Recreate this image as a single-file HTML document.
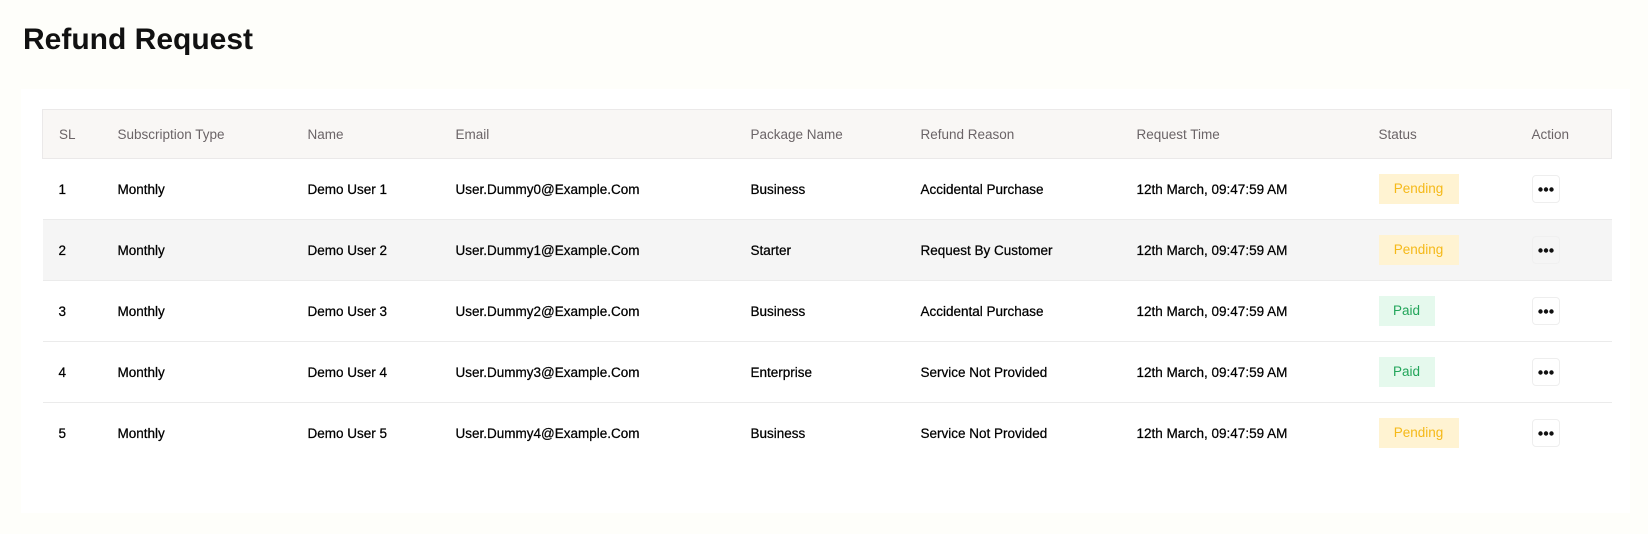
<!DOCTYPE html>
<html><head><style>
*{margin:0;padding:0;box-sizing:border-box}
body{width:1648px;height:534px;background:#fefefa;font-family:"Liberation Sans",sans-serif;position:relative;overflow:hidden}
h1{position:absolute;left:23px;top:23px;font-size:30px;font-weight:700;color:#111;letter-spacing:0px}
.card{position:absolute;left:21px;top:89px;width:1609px;height:424px;background:#fff}
table{position:absolute;left:21px;top:20px;width:1570px;border-collapse:collapse;font-size:13.5px}
th{height:49px;background:#f9f7f5;color:#6b6467;font-weight:400;text-align:left;border-top:1px solid #ebe9e9;border-bottom:1px solid #ebe9e9}
tr.h th:first-child{border-left:1px solid #ebe9e9}
tr.h th:last-child{border-right:1px solid #ebe9e9}
td{height:61px;color:#000;border-bottom:1px solid #ebebeb;padding:0;-webkit-text-stroke:0.25px #000}
tr:last-child td{border-bottom:none}
tr.alt td{background:#f5f5f5}
.b{display:inline-block;height:30px;line-height:30px;font-size:13.5px;text-align:center;-webkit-text-stroke:0}
.p{width:80px;background:#fff3d2;color:#f5b918}
.g{width:56px;background:#e5f9ed;color:#22a55a}
.d{display:inline-flex;align-items:center;justify-content:center;width:28px;height:28px;border:1px solid #eee;border-radius:4px}
tr.alt .d{border-color:#f0f0f0}
</style></head><body>
<h1>Refund Request</h1>
<div class="card">
<table>
<colgroup><col style="width:75px"><col style="width:190px"><col style="width:148px"><col style="width:295px"><col style="width:170px"><col style="width:216px"><col style="width:242px"><col style="width:153px"><col></colgroup>
<tr class="h"><th style="padding-left:16px">SL</th><th>Subscription Type</th><th>Name</th><th>Email</th><th>Package Name</th><th>Refund Reason</th><th>Request Time</th><th>Status</th><th>Action</th></tr>
<tr><td style="padding-left:16px">1</td><td>Monthly</td><td>Demo User 1</td><td>User.Dummy0@Example.Com</td><td>Business</td><td>Accidental Purchase</td><td>12th March, 09:47:59 AM</td><td><span class="b p">Pending</span></td><td><span class="d"><svg width="16" height="5"><circle cx="2.5" cy="2.5" r="2.2" fill="#111"/><circle cx="8" cy="2.5" r="2.2" fill="#111"/><circle cx="13.5" cy="2.5" r="2.2" fill="#111"/></svg></span></td></tr>
<tr class="alt"><td style="padding-left:16px">2</td><td>Monthly</td><td>Demo User 2</td><td>User.Dummy1@Example.Com</td><td>Starter</td><td>Request By Customer</td><td>12th March, 09:47:59 AM</td><td><span class="b p">Pending</span></td><td><span class="d"><svg width="16" height="5"><circle cx="2.5" cy="2.5" r="2.2" fill="#111"/><circle cx="8" cy="2.5" r="2.2" fill="#111"/><circle cx="13.5" cy="2.5" r="2.2" fill="#111"/></svg></span></td></tr>
<tr><td style="padding-left:16px">3</td><td>Monthly</td><td>Demo User 3</td><td>User.Dummy2@Example.Com</td><td>Business</td><td>Accidental Purchase</td><td>12th March, 09:47:59 AM</td><td><span class="b g">Paid</span></td><td><span class="d"><svg width="16" height="5"><circle cx="2.5" cy="2.5" r="2.2" fill="#111"/><circle cx="8" cy="2.5" r="2.2" fill="#111"/><circle cx="13.5" cy="2.5" r="2.2" fill="#111"/></svg></span></td></tr>
<tr><td style="padding-left:16px">4</td><td>Monthly</td><td>Demo User 4</td><td>User.Dummy3@Example.Com</td><td>Enterprise</td><td>Service Not Provided</td><td>12th March, 09:47:59 AM</td><td><span class="b g">Paid</span></td><td><span class="d"><svg width="16" height="5"><circle cx="2.5" cy="2.5" r="2.2" fill="#111"/><circle cx="8" cy="2.5" r="2.2" fill="#111"/><circle cx="13.5" cy="2.5" r="2.2" fill="#111"/></svg></span></td></tr>
<tr><td style="padding-left:16px">5</td><td>Monthly</td><td>Demo User 5</td><td>User.Dummy4@Example.Com</td><td>Business</td><td>Service Not Provided</td><td>12th March, 09:47:59 AM</td><td><span class="b p">Pending</span></td><td><span class="d"><svg width="16" height="5"><circle cx="2.5" cy="2.5" r="2.2" fill="#111"/><circle cx="8" cy="2.5" r="2.2" fill="#111"/><circle cx="13.5" cy="2.5" r="2.2" fill="#111"/></svg></span></td></tr>
</table>
</div>
</body></html>
